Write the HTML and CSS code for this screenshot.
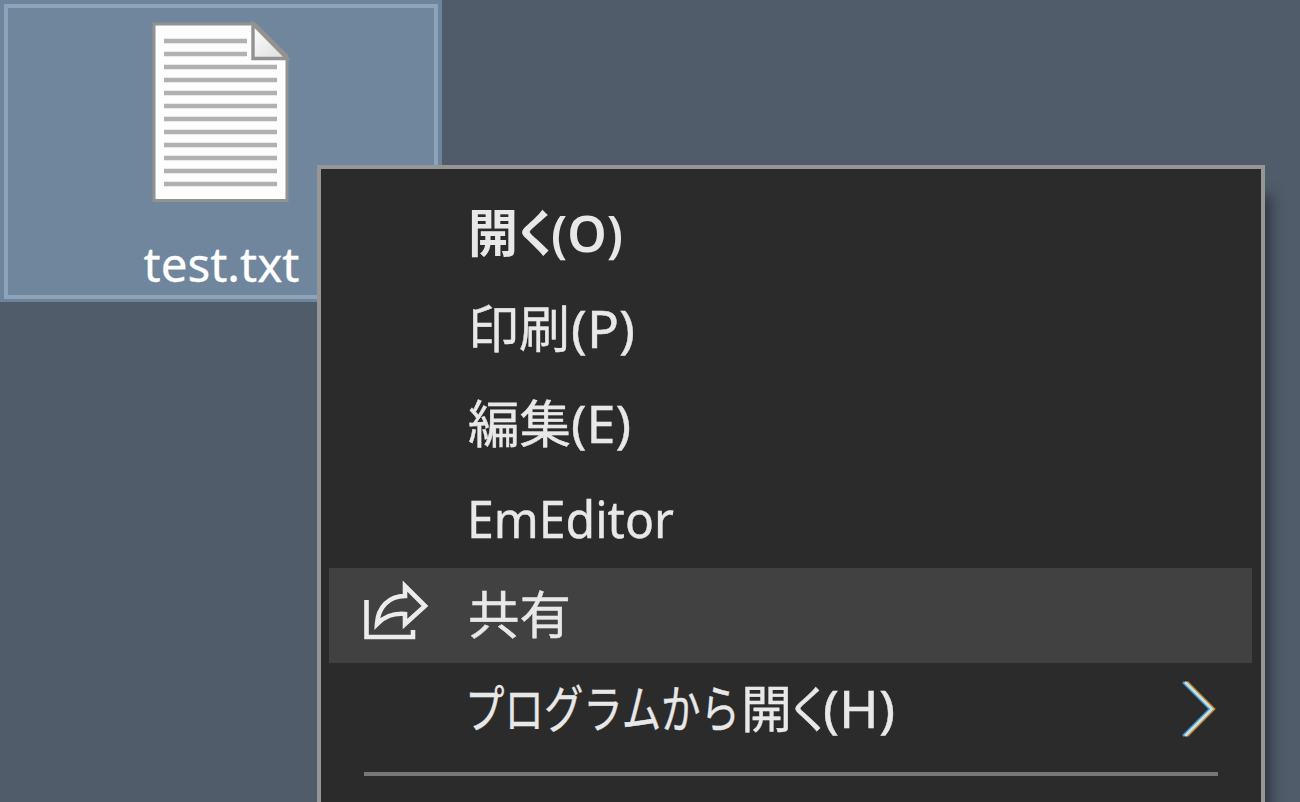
FILE: index.html
```html
<!DOCTYPE html>
<html lang="ja">
<head>
<meta charset="utf-8">
<title>test.txt</title>
<link rel="stylesheet" href="styles.css">
</head>
<body>
<main class="desktop">
  <div class="file">
    <div class="file-frame">
      <svg class="file-icon" width="140" height="184" viewBox="0 0 140 184">
        <defs>
          <linearGradient id="fold" x1="0" y1="0" x2="1" y2="1"><stop offset="0" stop-color="#fff"/><stop offset="1" stop-color="#dcdcdc"/></linearGradient>
        </defs>
        <path d="M3 4H104L136 36V180.500H3Z" fill="#fdfdfe" stroke="#929290" stroke-width="3"/>
        <path d="M13 21H96M13 34H96M13 47H126M13 60H126M13 73H126M13 86H126M13 99H126M13 112H126M13 125H126M13 138H126M13 151H126M13 164H126" stroke="#b1b1b1" stroke-width="4.400"/>
        <path d="M102 4L136 38.500H102Z" fill="url(#fold)" stroke="#929290" stroke-width="3.400"/>
      </svg>
      <svg class="file-name" width="160" height="60"><text x="2.500" y="42" textLength="156" lengthAdjust="spacingAndGlyphs">test.txt</text></svg>
    </div>
  </div>
  <nav class="menu">
    <div class="item strong">
      <svg class="label"><text y="64"><tspan x="-1" textLength="50" lengthAdjust="spacingAndGlyphs">開</tspan><tspan x="45" textLength="46" lengthAdjust="spacingAndGlyphs">く</tspan><tspan x="82" textLength="72" lengthAdjust="spacingAndGlyphs">(O)</tspan></text></svg>
    </div>
    <div class="item">
      <svg class="label"><text y="65"><tspan x="-1" textLength="102" lengthAdjust="spacingAndGlyphs">印刷</tspan><tspan x="102" textLength="64" lengthAdjust="spacingAndGlyphs">(P)</tspan></text></svg>
    </div>
    <div class="item">
      <svg class="label"><text y="65"><tspan x="-1" textLength="103" lengthAdjust="spacingAndGlyphs">編集</tspan><tspan x="102" textLength="60" lengthAdjust="spacingAndGlyphs">(E)</tspan></text></svg>
    </div>
    <div class="item">
      <svg class="label"><text x="-2" y="65" textLength="207" lengthAdjust="spacingAndGlyphs">EmEditor</text></svg>
    </div>
    <div class="item active">
      <svg class="share" width="70" height="64" viewBox="0 0 70 64"><path d="M5.500 20V57H52V50M44 6V16C28 16 17 27 16 44C24 36 32 33 44 34V44L64 26Z" fill="none" stroke="#ececec" stroke-width="4.600"/></svg>
      <svg class="label"><text y="66"><tspan x="-1" textLength="103" lengthAdjust="spacingAndGlyphs">共有</tspan></text></svg>
    </div>
    <div class="item">
      <svg class="label"><text y="65"><tspan x="-4" textLength="275" lengthAdjust="spacingAndGlyphs">プログラムから</tspan><tspan x="272" textLength="51" lengthAdjust="spacingAndGlyphs">開</tspan><tspan x="317" textLength="47" lengthAdjust="spacingAndGlyphs">く</tspan><tspan x="354" textLength="72" lengthAdjust="spacingAndGlyphs">(H)</tspan></text></svg>
      <svg class="chevron" width="40" height="64" viewBox="0 0 40 64"><g fill="none" stroke-width="2.600"><path d="M4 4L31 31L4 58" stroke="#4a91d0"/><path d="M8 4L35 31L8 58" stroke="#ce8033"/><path d="M6 4L33 31L6 58" stroke="#c2e5df"/></g></svg>
    </div>
    <div class="separator"></div>
  </nav>
</main>
</body>
</html>
```
FILE: styles.css
```css
* { box-sizing: border-box; }
body { margin: 0; overflow: hidden; }
.desktop {
  position: relative;
  width: 1300px;
  height: 802px;
  overflow: hidden;
  background: #505c6a;
}
.file {
  width: 442px;
  height: 302px;
  padding: 4px 4px 3px;
  background: #6b859e;
}
.file-frame {
  display: flex;
  flex-direction: column;
  align-items: center;
  height: 295px;
  padding-top: 12px;
  border: 4px solid #8ea3b8;
  background: #6f869d;
}
.file-icon { flex: none; }
.file-name { margin-top: 36px; flex: none; overflow: visible; }
.file-name text {
  font: 48px "Noto Sans", sans-serif;
  fill: #fff;
  stroke: #fff;
  stroke-width: 0.3px;
}
.menu {
  position: absolute;
  left: 317px;
  top: 165px;
  width: 948px;
  height: 660px;
  padding: 19px 9px 0 8px;
  border: 4px solid #969696;
  background: #2b2b2b;
  box-shadow: 12px 24px 12px -6px #252d3bcc;
}
.item {
  display: flex;
  align-items: center;
  height: 95px;
  padding-left: 140px;
}
.active {
  padding-left: 32px;
  background: #414141;
}
.label {
  flex: none;
  width: 440px;
  height: 95px;
  overflow: visible;
}
.label text {
  font: 51px "Noto Sans", "Noto Sans CJK JP", sans-serif;
  fill: #e8e8e8;
  stroke: #e8e8e8;
  stroke-width: 0.4px;
}
.strong .label text { font-weight: 600; stroke: none; }
.share { flex: none; margin: 0 38px 8px 0; }
.chevron { margin: 0 33px 2px auto; }
.separator {
  height: 4px;
  margin: 14px 34px 0 35px;
  background: #777;
}
```
